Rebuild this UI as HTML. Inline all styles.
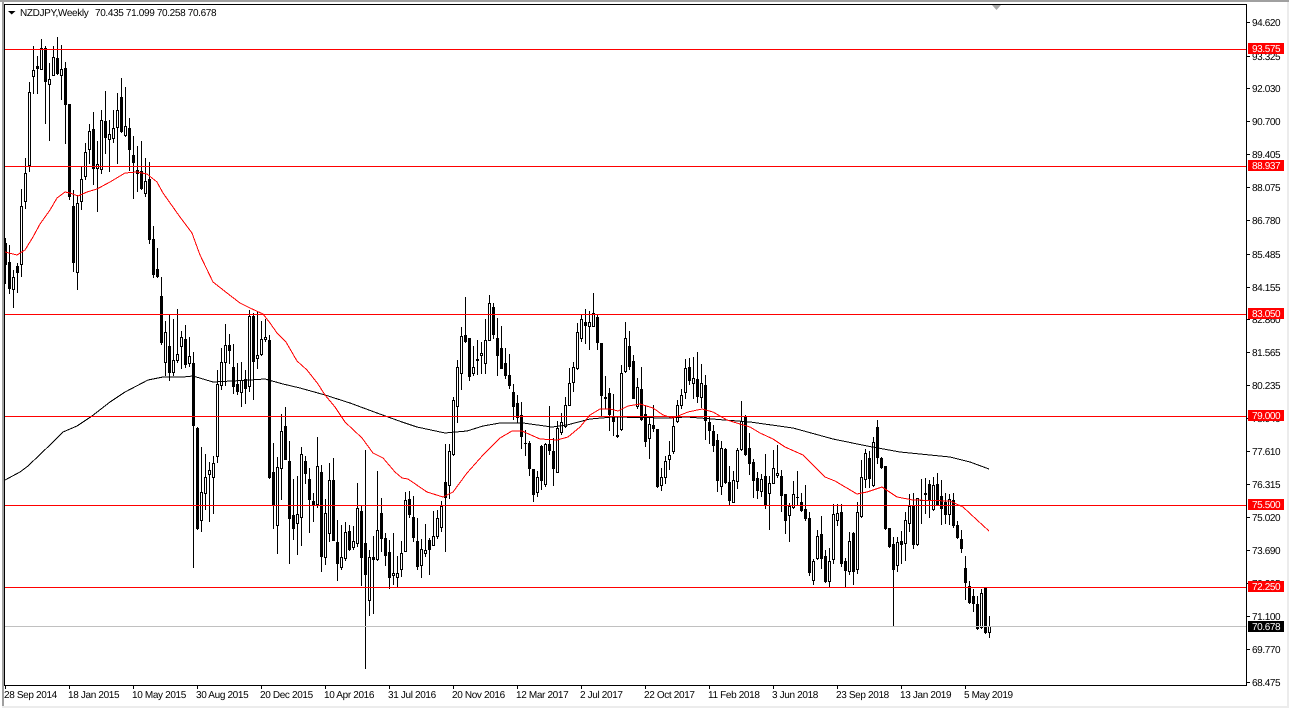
<!DOCTYPE html>
<html>
<head>
<meta charset="utf-8">
<title>NZDJPY,Weekly</title>
<style>
html,body{margin:0;padding:0;background:#fff;width:1289px;height:708px;overflow:hidden}
svg{position:absolute;left:0;top:0;display:block}
text{font-family:"Liberation Sans",sans-serif;font-size:10px;fill:#000;text-rendering:geometricPrecision}
.p{letter-spacing:-.4px}
.h{letter-spacing:-.35px}
.t text{letter-spacing:-.35px}
</style>
</head>
<body>
<svg id="c" width="1289" height="708" viewBox="0 0 1289 708" xmlns="http://www.w3.org/2000/svg">
<rect width="1289" height="708" fill="#fff"/>
<rect x="0" y="0" width="1289" height="2" fill="#a0a0a0"/>
<rect x="2" y="0" width="2" height="708" fill="#a0a0a0"/>
<rect x="1287" y="2" width="2" height="706" fill="#ececec"/>
<rect x="2" y="706" width="1287" height="2" fill="#ececec"/>
<g id="cand" shape-rendering="crispEdges"></g>
<g shape-rendering="crispEdges" fill="none" stroke-width="1">
<polyline stroke="#000" points="5,480 20,472 28,466 52,443 63,432 77,426 92,416 110,402 125,392 148,380 163,377 183,377 193,376 213,382 232,381 250,380 265,379 283,384 300,388 325,395 350,403 377,413 402,422 417,427 445,433 467,431 483,426 500,423 523,423 552,427 567,425 590,419 613,417 667,418 687,417 750,422 793,428 833,439 867,446 900,452 950,457 970,462 989,469"/>
<polyline stroke="#f00" points="5,252 17,255 25,250 33,237 40,224 50,210 57,198 65,192 70,193 78,196 87,192 97,189 110,182 125,173 137,172 147,174 157,182 163,193 180,217 192,233 200,255 213,282 227,293 240,303 250,308 263,314 270,323 277,333 286,342 297,361 307,370 318,384 325,395 335,407 345,422 362,438 373,453 383,458 395,472 402,478 408,479 427,492 443,497 453,492 467,473 483,455 500,438 512,431 522,431 540,439 557,440 568,437 580,427 590,415 600,409 610,409 618,411 628,406 640,404 653,408 663,415 673,418 688,412 702,409 713,412 727,420 740,424 750,427 760,433 773,439 785,447 803,455 815,467 825,477 835,481 857,494 867,492 882,487 897,497 913,500 950,501 963,507 977,520 989,531"/>
</g>
<g shape-rendering="crispEdges" fill="#f00">
<rect x="5" y="49" width="1242" height="1"/>
<rect x="5" y="166" width="1242" height="1"/>
<rect x="5" y="314" width="1242" height="1"/>
<rect x="5" y="416" width="1242" height="1"/>
<rect x="5" y="505" width="1242" height="1"/>
<rect x="5" y="587" width="1242" height="1"/>
<rect x="5" y="626" width="1242" height="1" fill="#c0c0c0"/>
</g>
<g shape-rendering="crispEdges" fill="#000">
<rect x="4" y="4" width="1243" height="1"/>
<rect x="4" y="4" width="1" height="682"/>
<rect x="1246" y="4" width="1" height="682"/>
<rect x="4" y="685" width="1243" height="1"/>
</g>
<polygon points="992,5 1001,5 996.5,10" fill="#a8a8a8"/>
<polygon points="8,11 15.5,11 11.7,14.5" fill="#000"/>
<text x="20" y="16" class="h">NZDJPY,Weekly</text>
<text x="95" y="16" class="h">70.435 71.099 70.258 70.678</text>
<g id="pt" shape-rendering="crispEdges" fill="#000"></g>
<g class="p">
<text x="1252" y="26" class="p">94.620</text>
<text x="1252" y="60" class="p">93.325</text>
<text x="1252" y="92" class="p">92.030</text>
<text x="1252" y="125" class="p">90.700</text>
<text x="1252" y="158" class="p">89.405</text>
<text x="1252" y="191" class="p">88.075</text>
<text x="1252" y="224" class="p">86.780</text>
<text x="1252" y="258" class="p">85.485</text>
<text x="1252" y="291" class="p">84.155</text>
<text x="1252" y="323" class="p">82.860</text>
<text x="1252" y="356" class="p">81.565</text>
<text x="1252" y="389" class="p">80.235</text>
<text x="1252" y="422" class="p">78.940</text>
<text x="1252" y="455" class="p">77.610</text>
<text x="1252" y="488" class="p">76.315</text>
<text x="1252" y="521" class="p">75.020</text>
<text x="1252" y="554" class="p">73.690</text>
<text x="1252" y="587" class="p">72.395</text>
<text x="1252" y="620" class="p">71.100</text>
<text x="1252" y="653" class="p">69.770</text>
<text x="1252" y="686" class="p">68.475</text>
</g>
<g shape-rendering="crispEdges">
<rect x="1248" y="43" width="36" height="11" fill="#f00"/>
<rect x="1248" y="160" width="36" height="11" fill="#f00"/>
<rect x="1248" y="308" width="36" height="11" fill="#f00"/>
<rect x="1248" y="410" width="36" height="11" fill="#f00"/>
<rect x="1248" y="499" width="36" height="11" fill="#f00"/>
<rect x="1248" y="581" width="36" height="11" fill="#f00"/>
<rect x="1248" y="621" width="36" height="11" fill="#000"/>
</g>
<g>
<text x="1252" y="52" class="p" style="fill:#fff">93.575</text>
<text x="1252" y="169" class="p" style="fill:#fff">88.937</text>
<text x="1252" y="317" class="p" style="fill:#fff">83.050</text>
<text x="1252" y="419" class="p" style="fill:#fff">79.000</text>
<text x="1252" y="508" class="p" style="fill:#fff">75.500</text>
<text x="1252" y="590" class="p" style="fill:#fff">72.250</text>
<text x="1252" y="630" class="p" style="fill:#fff">70.678</text>
</g>
<g class="t">
<text x="4" y="698">28 Sep 2014</text>
<text x="68" y="698">18 Jan 2015</text>
<text x="132" y="698">10 May 2015</text>
<text x="196" y="698">30 Aug 2015</text>
<text x="260" y="698">20 Dec 2015</text>
<text x="324" y="698">10 Apr 2016</text>
<text x="388" y="698">31 Jul 2016</text>
<text x="452" y="698">20 Nov 2016</text>
<text x="516" y="698">12 Mar 2017</text>
<text x="580" y="698">2 Jul 2017</text>
<text x="644" y="698">22 Oct 2017</text>
<text x="708" y="698">11 Feb 2018</text>
<text x="772" y="698">3 Jun 2018</text>
<text x="836" y="698">23 Sep 2018</text>
<text x="900" y="698">13 Jan 2019</text>
<text x="964" y="698">5 May 2019</text>
</g>
</svg>
<script>
(function(){
var k='',w='',idx=0;
function seg(oy,data){
  for(var n=0;n<data.length;n++){
    var d=data[n],x=5+4*idx;idx++;
    var h=Math.floor(oy+d[0]/3),l=Math.ceil(oy+d[1]/3),t=Math.floor(oy+d[2]/3),b=Math.ceil(oy+d[3]/3);
    if(b<=t)b=t+1;
    k+='M'+x+' '+h+'h1V'+l+'h-1z';
    k+='M'+(x-1)+' '+t+'h3V'+b+'h-3z';
    if(!d[4]&&b-t>2){w+='M'+x+' '+(t+1)+'h1V'+(b-1)+'h-1z';}
  }
}
seg(0,[
[715,850,730,795,1],[735,880,787,865,1],[812,922,832,868,0],[790,878,800,818,1],[568,830,618,795,0],
[475,625,520,605,0],[247,515,277,497,0],[138,282,210,230,0],[168,282,198,206,1],[118,210,145,208,0],
[138,370,145,245,1],[190,422,238,254,0],[140,228,172,226,0],[112,225,175,222,1],[135,298,208,226,0],
[187,432,205,314,1],[313,600,313,590,1],[570,815,618,788,1],[585,868,610,818,0],[500,628,538,606,0],
[430,538,457,530,0],[372,490,394,449,0],[338,555,388,505,1],[424,635,494,505,0],[332,520,361,509,0],
[274,460,364,413,1],[360,515,403,418,0],[330,428,385,416,0],[280,490,330,384,0],[235,398,292,395,1],
[262,410,379,407,0],[355,512,385,449,1],[410,597,465,488,1],[440,575,511,522,1],[425,570,513,567,1],
[475,590,544,581,0],[488,730,538,718,1],[680,832,718,825,1],[745,832,808,830,1],[832,1035,888,1029,1]
]);
seg(300,[
[65,228,97,187,0],[45,242,139,218,1],[58,228,181,217,0],[28,187,163,181,0],[95,205,112,139,0],
[75,203,118,193,1],[112,200,169,190,0],[157,802,190,377,1],[382,690,384,687,1],[442,695,577,662,0],
[463,628,532,580,0],[487,665,512,523,0],[470,642,490,532,0],[210,488,253,469,0],[145,268,187,256,0],
[72,258,136,187,0],[102,190,136,151,1],[133,280,202,259,1],[190,285,253,275,1],[187,320,241,277,0],
[210,310,238,265,1],[30,275,50,260,0]
]);
seg(290,[
[70,330,78,215,1],[68,237,195,205,0],[94,198,148,194,0],[88,155,142,149,0],[135,565,150,562,1],
[460,715,546,645,1],[503,790,532,707,0],[372,630,424,536,0],[352,510,408,510,1],[453,822,514,686,1],
[567,750,675,717,1],[560,795,672,700,0],[472,768,493,683,0],[498,580,514,552,1],[535,728,567,630,1],
[610,695,633,647,1],[442,652,528,645,0],[525,845,546,800,1],[628,825,670,803,0],[520,755,570,730,0],
[505,752,570,752,1],[690,872,756,822,1],[706,838,802,833,0],[697,812,727,806,0],[705,782,723,780,1],
[708,778,754,774,0],[580,770,655,760,0],[650,888,663,803,1],[480,1137,760,854,1],[780,978,802,932,0],
[740,972,802,808,1],[545,812,720,808,0],[625,785,670,746,1],[730,828,746,797,1],[750,895,786,863,1],
[730,885,850,856,0],[800,892,850,862,0],[755,860,790,838,0],[608,785,630,785,0],[603,682,628,675,1],
[620,755,681,743,1],[685,840,753,830,1],[748,863,778,826,0],[702,800,781,791,0],[745,855,751,780,1],
[665,768,738,766,0],[660,745,684,740,0],[635,725,648,712,0],[462,785,576,622,1],[463,627,485,586,0],
[322,497,331,494,0],[210,397,232,350,0],[113,298,138,250,0],[22,158,135,155,1],[145,272,145,260,1],
[168,258,232,252,0],[150,255,207,212,1],[158,250,190,196,0],[88,250,152,220,0],[15,152,40,152,0],
[40,145,52,134,1],[85,258,145,197,1]
]);
seg(285,[
[123,252,190,252,1],[190,280,234,272,1],[207,310,270,303,1],[298,405,323,366,1],[330,412,354,398,1],
[352,490,391,456,1],[435,512,474,476,1],[470,572,474,551,1],[553,650,553,628,1],[560,635,577,623,0],
[480,615,484,588,1],[475,605,478,600,0],[365,508,478,497,1],[460,602,498,551,1],[410,563,430,563,0],
[385,450,412,442,0],[338,427,361,424,0],[250,362,294,361,0],[232,320,246,293,0],[115,254,142,251,0],
[90,170,103,161,0],[72,175,111,123,1],[78,195,111,124,0],[25,125,85,125,0],[88,195,96,173,1],
[174,395,174,332,1],[275,370,336,341,1],[310,438,325,390,1],[327,452,397,410,1],[395,458,450,456,1],
[240,436,265,433,0],[112,262,160,260,0],[140,255,184,245,1],[212,342,228,340,1],[280,372,307,365,0],
[246,408,313,405,1],[360,485,388,470,1],[395,520,417,460,0],[362,440,420,432,1],[432,608,432,604,1],
[550,618,576,602,0],[513,597,529,577,0],[468,555,511,524,0],[400,505,424,500,0],[345,412,361,410,0],
[313,372,331,363,0],[222,342,250,323,0],[220,300,247,287,1],[218,340,280,296,0],[202,352,282,336,1],
[238,368,295,339,0],[272,465,300,408,1],[397,475,412,438,1],[420,500,438,482,1],[448,620,465,587,1],
[470,630,490,605,0],[490,595,492,593,1],[545,660,592,648,1],[560,653,587,653,0],[490,610,496,591,0],
[350,497,408,494,0],[390,512,396,510,1],[445,570,490,535,1]
]);
seg(400,[
[178,292,186,242,1],[218,295,234,272,1],[222,290,237,275,0],[162,325,228,313,1],[230,390,250,280,0],
[150,252,205,250,0],[135,232,221,228,0],[210,335,228,287,1],[282,402,282,362,1],[310,425,318,347,0],
[243,325,282,323,0],[213,318,292,294,1],[280,335,306,332,1],[255,362,327,356,1],[336,528,354,518,1],
[478,555,484,542,0],[392,480,408,476,0],[350,505,402,477,1],[450,547,468,546,1],[445,562,483,544,0],
[312,492,343,480,0],[312,378,340,362,0],[312,500,336,491,1],[475,562,484,513,1],[398,523,424,514,0],
[397,553,400,515,1],[308,520,336,510,0],[180,352,233,350,0],[148,263,160,238,0],[155,262,175,236,1],
[112,260,127,258,0],[60,190,82,173,1],[173,207,175,202,1],[198,390,198,387,1],[385,443,385,440,1],
[412,680,433,510,1],[412,515,427,497,0],[395,492,423,434,1],[338,482,360,432,0],[282,395,320,371,0],
[280,445,316,435,1],[296,436,296,434,0],[238,370,300,303,1],[235,340,280,285,1],[242,352,252,298,1],
[232,332,256,330,0],[220,318,252,316,1],[240,375,290,326,1],[280,372,306,345,1],[283,375,298,345,0],
[280,382,302,378,1],[365,415,376,413,1],[390,458,418,446,1],[468,600,504,548,1],[545,612,558,607,1],
[568,636,590,610,1],[590,688,612,685,1],[568,686,579,683,0],[563,700,563,698,1],[648,713,680,697,0]
]);
document.getElementById('cand').innerHTML='<path d="'+k+'" fill="#000"/><path d="'+w+'" fill="#fff"/>';
var pt='',ys=[22,56,88,121,154,187,220,254,287,319,352,385,418,451,484,517,550,583,616,649,682];
for(var i=0;i<ys.length;i++)pt+='<rect x="1247" y="'+ys[i]+'" width="3" height="1"/>';
for(var j=0;j<16;j++)pt+='<rect x="'+(5+64*j)+'" y="686" width="1" height="3"/>';
document.getElementById('pt').innerHTML=pt;
})();
</script>
</body>
</html>
